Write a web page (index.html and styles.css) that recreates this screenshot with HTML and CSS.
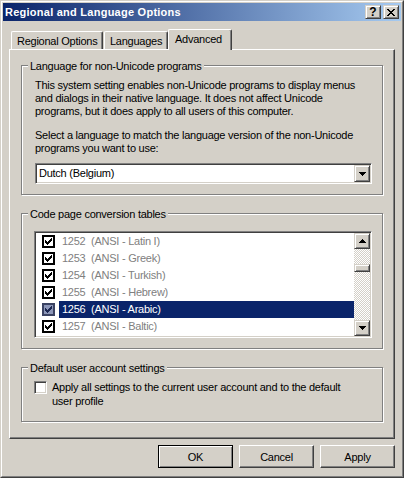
FILE: index.html
```html
<!DOCTYPE html>
<html>
<head>
<meta charset="utf-8">
<title>Regional and Language Options</title>
<link rel="stylesheet" href="styles.css">
</head>
<body>
<div class="window">
  <div class="frame">
    <div class="titlebar">
      <span class="title">Regional and Language Options</span>
      <div class="caps">
        <div class="cap help">?</div>
        <div class="cap">
          <svg width="8" height="7" viewBox="0 0 8 7" shape-rendering="crispEdges"><path d="M0 0h2v1h-2z M6 0h2v1h-2z M1 1h2v1h-2z M5 1h2v1h-2z M2 2h4v1h-4z M3 3h2v1h-2z M2 4h4v1h-4z M1 5h2v1h-2z M5 5h2v1h-2z M0 6h2v1h-2z M6 6h2v1h-2z" fill="#000"/></svg>
        </div>
      </div>
    </div>

    <div class="tabs">
      <div class="tab t1">Regional Options</div>
      <div class="tab t2">Languages</div>
      <div class="tab active">Advanced</div>
    </div>

    <div class="panel">
      <div class="group g1">
        <div class="legend">Language for non-Unicode programs</div>
        <p class="desc">This system setting enables non-Unicode programs to display menus<br>and dialogs in their native language. It does not affect Unicode<br>programs, but it does apply to all users of this computer.</p>
        <p class="desc">Select a language to match the language version of the non-Unicode<br>programs you want to use:</p>
        <div class="combo">
          <span class="combo-text">Dutch (Belgium)</span>
          <span class="raised combo-btn">
            <svg width="7" height="4" viewBox="0 0 7 4" shape-rendering="crispEdges"><path d="M0 0H7V1H6V2H5V3H4V4H3V3H2V2H1V1H0Z" fill="#000"/></svg>
          </span>
        </div>
      </div>

      <div class="group g2">
        <div class="legend">Code page conversion tables</div>
        <div class="listbox">
          <div class="items">
            <div class="row"><span class="lchk"><svg width="7" height="7" viewBox="0 0 7 7" shape-rendering="crispEdges"><path d="M0 2h1v3h-1z M1 3h1v3h-1z M2 4h1v3h-1z M3 3h1v3h-1z M4 2h1v3h-1z M5 1h1v3h-1z M6 0h1v3h-1z" fill="#000"/></svg></span><span class="lbl">1252  (ANSI - Latin I)</span></div>
            <div class="row"><span class="lchk"><svg width="7" height="7" viewBox="0 0 7 7" shape-rendering="crispEdges"><path d="M0 2h1v3h-1z M1 3h1v3h-1z M2 4h1v3h-1z M3 3h1v3h-1z M4 2h1v3h-1z M5 1h1v3h-1z M6 0h1v3h-1z" fill="#000"/></svg></span><span class="lbl">1253  (ANSI - Greek)</span></div>
            <div class="row"><span class="lchk"><svg width="7" height="7" viewBox="0 0 7 7" shape-rendering="crispEdges"><path d="M0 2h1v3h-1z M1 3h1v3h-1z M2 4h1v3h-1z M3 3h1v3h-1z M4 2h1v3h-1z M5 1h1v3h-1z M6 0h1v3h-1z" fill="#000"/></svg></span><span class="lbl">1254  (ANSI - Turkish)</span></div>
            <div class="row"><span class="lchk"><svg width="7" height="7" viewBox="0 0 7 7" shape-rendering="crispEdges"><path d="M0 2h1v3h-1z M1 3h1v3h-1z M2 4h1v3h-1z M3 3h1v3h-1z M4 2h1v3h-1z M5 1h1v3h-1z M6 0h1v3h-1z" fill="#000"/></svg></span><span class="lbl">1255  (ANSI - Hebrew)</span></div>
            <div class="row sel"><span class="lchk"><svg width="7" height="7" viewBox="0 0 7 7" shape-rendering="crispEdges"><path d="M0 2h1v3h-1z M1 3h1v3h-1z M2 4h1v3h-1z M3 3h1v3h-1z M4 2h1v3h-1z M5 1h1v3h-1z M6 0h1v3h-1z" fill="#1a2550"/></svg></span><span class="lbl">1256  (ANSI - Arabic)</span></div>
            <div class="row"><span class="lchk"><svg width="7" height="7" viewBox="0 0 7 7" shape-rendering="crispEdges"><path d="M0 2h1v3h-1z M1 3h1v3h-1z M2 4h1v3h-1z M3 3h1v3h-1z M4 2h1v3h-1z M5 1h1v3h-1z M6 0h1v3h-1z" fill="#000"/></svg></span><span class="lbl">1257  (ANSI - Baltic)</span></div>
          </div>
          <div class="vscroll">
            <div class="raised sbtn">
              <svg width="7" height="4" viewBox="0 0 7 4" shape-rendering="crispEdges"><path d="M3 0H4V1H5V2H6V3H7V4H0V3H1V2H2V1H3Z" fill="#000"/></svg>
            </div>
            <div class="track"><div class="raised thumb"></div></div>
            <div class="raised sbtn">
              <svg width="7" height="4" viewBox="0 0 7 4" shape-rendering="crispEdges"><path d="M0 0H7V1H6V2H5V3H4V4H3V3H2V2H1V1H0Z" fill="#000"/></svg>
            </div>
          </div>
        </div>
      </div>

      <div class="group g3">
        <div class="legend">Default user account settings</div>
        <div class="optrow">
          <span class="chk"></span>
          <span class="optlbl">Apply all settings to the current user account and to the default<br>user profile</span>
        </div>
      </div>
    </div>

    <div class="buttons">
      <div class="btn default">OK</div>
      <div class="btn">Cancel</div>
      <div class="btn">Apply</div>
    </div>
  </div>
</div>
</body>
</html>
```

FILE: styles.css
```css
html, body {
  margin: 0;
  padding: 0;
  background: #D4D0C8;
}

body {
  font-family: "Liberation Sans", Arial, sans-serif;
  font-size: 11px;
  letter-spacing: -0.25px;
  color: #000;
}

.window {
  width: 404px;
  height: 478px;
  box-sizing: border-box;
  border: 1px solid;
  border-color: #D4D0C8 #404040 #404040 #D4D0C8;
}

.frame {
  height: 100%;
  box-sizing: border-box;
  border: 1px solid;
  border-color: #fff #808080 #808080 #fff;
  padding: 1px;
  display: flex;
  flex-direction: column;
  background: #D4D0C8;
}

/* title bar */
.titlebar {
  height: 18px;
  flex: none;
  display: flex;
  align-items: center;
  padding: 0 2px;
  background: linear-gradient(to right, #0A246A, #A6CAF0);
}

.title {
  color: #fff;
  font-weight: bold;
  letter-spacing: 0.25px;
}

.caps {
  margin-left: auto;
  display: flex;
  gap: 2px;
}

.cap {
  width: 16px;
  height: 14px;
  box-sizing: border-box;
  border: 1px solid;
  border-color: #D4D0C8 #404040 #404040 #D4D0C8;
  box-shadow: inset 1px 1px #fff, inset -1px -1px #808080;
  background: #D4D0C8;
  display: flex;
  align-items: center;
  justify-content: center;
}

.cap.help {
  font-weight: bold;
  font-size: 12px;
  line-height: 12px;
  letter-spacing: 0;
}

/* tabs */
.tabs {
  flex: none;
  display: flex;
  align-items: flex-start;
  height: 21px;
  margin: 8px 0 -1px;
  padding-left: 8px;
}

.tab {
  box-sizing: border-box;
  height: 18px;
  margin-top: 2px;
  border: 1px solid;
  border-color: #fff #404040 transparent #fff;
  border-bottom: 0;
  border-radius: 2px 2px 0 0;
  box-shadow: inset -1px 0 #808080;
  background: #D4D0C8;
  padding-left: 5px;
  line-height: 18px;
  white-space: nowrap;
}

.t1 { width: 92px; }
.t2 { width: 64px; margin-left: 1px; }

.tab.active {
  width: 64px;
  height: 21px;
  margin-top: 0;
  padding-left: 6px;
  position: relative;
  z-index: 1;
}

/* panel */
.panel {
  flex: none;
  margin: 0 6px;
  height: 390px;
  box-sizing: border-box;
  border: 1px solid;
  border-color: #fff #404040 #404040 #fff;
  box-shadow: inset -1px -1px #808080;
  padding: 15px 11px 0;
}

.group {
  box-sizing: border-box;
  border: 1px solid #808080;
  box-shadow: inset 1px 1px #fff, 1px 1px #fff;
}

.g1 { height: 130px; }
.g2 { height: 136px; margin-top: 18px; }
.g3 { height: 55px; margin-top: 18px; }

.legend {
  display: table;
  margin: -6px 0 0 6px;
  padding: 0 2px;
  background: #D4D0C8;
  line-height: 13px;
}

.desc {
  margin: 6px 0 0 13px;
  line-height: 13px;
  white-space: nowrap;
}

.desc + .desc {
  margin-top: 11px;
}

/* sunken fields */
.combo,
.listbox {
  box-sizing: border-box;
  border: 1px solid;
  border-color: #808080 #fff #fff #808080;
  box-shadow: inset 1px 1px #404040, inset -1px -1px #D4D0C8;
  padding: 1px;
  background: #fff;
  display: flex;
}

.combo {
  margin: 8px 0 0 13px;
  width: 337px;
  height: 21px;
}

.combo-text {
  flex: 1;
  padding-left: 2px;
  line-height: 17px;
}

.raised {
  box-sizing: border-box;
  border: 1px solid;
  border-color: #D4D0C8 #404040 #404040 #D4D0C8;
  box-shadow: inset 1px 1px #fff, inset -1px -1px #808080;
  background: #D4D0C8;
}

.combo-btn {
  width: 16px;
  display: flex;
  align-items: center;
  justify-content: center;
}

/* list */
.listbox {
  margin: 10px 0 0 12px;
  width: 338px;
  height: 107px;
}

.items {
  flex: 1;
  overflow: hidden;
}

.row {
  height: 17px;
  display: flex;
  align-items: center;
}

.lchk {
  width: 13px;
  height: 13px;
  box-sizing: border-box;
  border: 2px solid #000;
  background: #fff;
  margin-left: 6px;
  display: flex;
  align-items: center;
  justify-content: center;
  flex: none;
}

.lbl {
  flex: 1;
  margin-left: 4px;
  padding-left: 3px;
  line-height: 17px;
  color: #808080;
  white-space: pre;
}

.row.sel .lchk {
  border-color: #3a4262;
  background: #8c96b8;
}

.row.sel .lbl {
  background: #0A246A;
  color: #fff;
}

.vscroll {
  width: 16px;
  flex: none;
  display: flex;
  flex-direction: column;
}

.sbtn {
  height: 16px;
  flex: none;
  display: flex;
  align-items: center;
  justify-content: center;
}

.track {
  flex: 1;
  background-image: conic-gradient(#fff 0 25%, #D4D0C8 0 50%, #fff 0 75%, #D4D0C8 0);
  background-size: 2px 2px;
}

.thumb {
  height: 8px;
  margin-top: 15px;
}

/* checkbox option */
.optrow {
  display: flex;
  align-items: flex-start;
  margin: 5px 0 0 12px;
}

.chk {
  width: 13px;
  height: 13px;
  flex: none;
  margin-top: 1px;
  box-sizing: border-box;
  border: 1px solid;
  border-color: #808080 #fff #fff #808080;
  box-shadow: inset 1px 1px #404040, inset -1px -1px #D4D0C8;
  background: #fff;
}

.optlbl {
  margin-left: 5px;
  line-height: 14px;
  white-space: nowrap;
}

/* dialog buttons */
.buttons {
  flex: none;
  display: flex;
  justify-content: flex-end;
  gap: 6px;
  margin-top: 6px;
  padding-right: 6px;
}

.btn {
  width: 75px;
  height: 23px;
  box-sizing: border-box;
  border: 1px solid;
  border-color: #fff #404040 #404040 #fff;
  box-shadow: inset -1px -1px #808080;
  display: flex;
  align-items: center;
  justify-content: center;
}

.btn.default {
  border-color: #000;
  box-shadow: inset 1px 1px #fff, inset -1px -1px #808080;
}
```
